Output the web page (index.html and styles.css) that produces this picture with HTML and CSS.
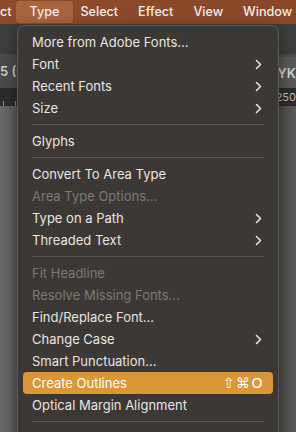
FILE: index.html
```html
<!DOCTYPE html>
<html lang="en">
<head>
    <meta charset="UTF-8">
    <meta name="viewport" content="width=device-width, initial-scale=1.0">
    <title>Type Menu</title>
    <link rel="stylesheet" href="styles.css">
</head>
<body>

    <nav class="menubar">
        <span class="menubar-item clipped">ct</span>
        <span class="menubar-item active">Type</span>
        <span class="menubar-item">Select</span>
        <span class="menubar-item">Effect</span>
        <span class="menubar-item">View</span>
        <span class="menubar-item">Window</span>
    </nav>

    <!-- Illustrator workspace behind the open menu -->
    <div class="workspace">
        <div class="tab-strip">
            <span class="tab-label">5 (C</span>
            <span class="tab-label right">MYK</span>
        </div>
        <div class="ruler">
            <span class="ruler-ticks"></span>
            <span class="ruler-num">250</span>
        </div>
        <div class="canvas"></div>

        <!-- The dropped-down Type menu -->
        <div class="menu">
            <div class="menu-item">More from Adobe Fonts...</div>
            <div class="menu-item has-sub">Font <svg class="chev" viewBox="0 0 7 11"><path d="M1.5 1.5 L5.5 5.5 L1.5 9.5"/></svg></div>
            <div class="menu-item has-sub">Recent Fonts <svg class="chev" viewBox="0 0 7 11"><path d="M1.5 1.5 L5.5 5.5 L1.5 9.5"/></svg></div>
            <div class="menu-item has-sub">Size <svg class="chev" viewBox="0 0 7 11"><path d="M1.5 1.5 L5.5 5.5 L1.5 9.5"/></svg></div>
            <div class="separator"></div>
            <div class="menu-item">Glyphs</div>
            <div class="separator"></div>
            <div class="menu-item">Convert To Area Type</div>
            <div class="menu-item disabled">Area Type Options...</div>
            <div class="menu-item has-sub">Type on a Path <svg class="chev" viewBox="0 0 7 11"><path d="M1.5 1.5 L5.5 5.5 L1.5 9.5"/></svg></div>
            <div class="menu-item has-sub">Threaded Text <svg class="chev" viewBox="0 0 7 11"><path d="M1.5 1.5 L5.5 5.5 L1.5 9.5"/></svg></div>
            <div class="separator"></div>
            <div class="menu-item disabled">Fit Headline</div>
            <div class="menu-item disabled">Resolve Missing Fonts...</div>
            <div class="menu-item">Find/Replace Font...</div>
            <div class="menu-item has-sub">Change Case <svg class="chev" viewBox="0 0 7 11"><path d="M1.5 1.5 L5.5 5.5 L1.5 9.5"/></svg></div>
            <div class="menu-item">Smart Punctuation...</div>
            <div class="menu-item selected">Create Outlines <span class="shortcut">⇧⌘O</span></div>
            <div class="menu-item">Optical Margin Alignment</div>
            <div class="separator"></div>
        </div>
    </div>

</body>
</html>
```

FILE: styles.css
```css
body {
    margin: 0;
    width: 296px;
    height: 432px;
    overflow: hidden;
    font-family: Inter, "Noto Sans", "DejaVu Sans", sans-serif;
    font-size: 13px;
    background: #5c5c5c;
}

/* Top menu bar */
.menubar {
    display: flex;
    align-items: center;
    height: 24px;
    background: linear-gradient(90deg, #8d4a2b, #8a4828);
    color: #f5ece6;
    font-size: 12.6px;
    font-weight: 500;
    white-space: nowrap;
}

.menubar-item {
    padding: 0 10px;
    line-height: 22px;
    border-radius: 4px;
}

.menubar-item.clipped {
    padding-left: 0;
    margin-right: -3px;
}

.menubar-item.active {
    padding: 0 14px;
    margin: 0 -3px;
    background: #a8633f;
}

/* Workspace behind menu */
.workspace {
    position: relative;
    height: 408px;
}

.tab-strip {
    height: 64px;
    background: linear-gradient(180deg, #3d3d3d 0, #3d3d3d 30px, #4a4a4a 30px);
    display: flex;
    justify-content: space-between;
    align-items: flex-end;
    padding-bottom: 9px;
    box-sizing: border-box;
    color: #cfcfcf;
    font-weight: 600;
}

.tab-label.right {
    background: #575757;
    padding: 8px 0 7px 3px;
    margin-bottom: -9px;
}

.ruler {
    height: 18px;
    background: #2c2c2c;
    display: flex;
    justify-content: space-between;
    align-items: center;
    color: #bdbdbd;
    font-size: 11px;
}

.ruler-ticks {
    align-self: flex-end;
    width: 20px;
    height: 5px;
    background: repeating-linear-gradient(90deg, transparent 0 3px, #8a8a8a 3px 4px, transparent 4px 12px);
}

.canvas {
    height: 326px;
    background: linear-gradient(90deg, #6a6a6a 0, #5a5a5a 17px, #4a4a4a 280px, #5a5a5a 296px);
}

/* Dropdown menu */
.menu {
    position: absolute;
    top: 1px;
    left: 17px;
    width: 262px;
    height: 420px;
    box-sizing: border-box;
    padding: 5px 5px;
    background: #3c3835;
    border: 1px solid #5d5955;
    border-bottom: none;
    border-radius: 7px 7px 0 0;
    box-shadow: 0 4px 14px rgba(0, 0, 0, 0.45);
    color: #e8e5e2;
}

.menu-item {
    display: flex;
    align-items: center;
    justify-content: space-between;
    height: 22px;
    padding: 0 9px;
    border-radius: 4px;
    white-space: nowrap;
}

.menu-item.disabled {
    color: #7d7975;
}

.menu-item.selected {
    background: #db9638;
    color: #fff;
}

.chev {
    width: 7px;
    height: 11px;
    margin-right: 2px;
    fill: none;
    stroke: #e8e5e2;
    stroke-width: 1.6;
    stroke-linecap: round;
    stroke-linejoin: round;
}

.shortcut {
    font-family: "DejaVu Sans", sans-serif;
    font-size: 14px;
    letter-spacing: 1.5px;
    margin-right: 0;
}

.separator {
    height: 1px;
    margin: 5px 9px;
    background: #5a5653;
}
```
